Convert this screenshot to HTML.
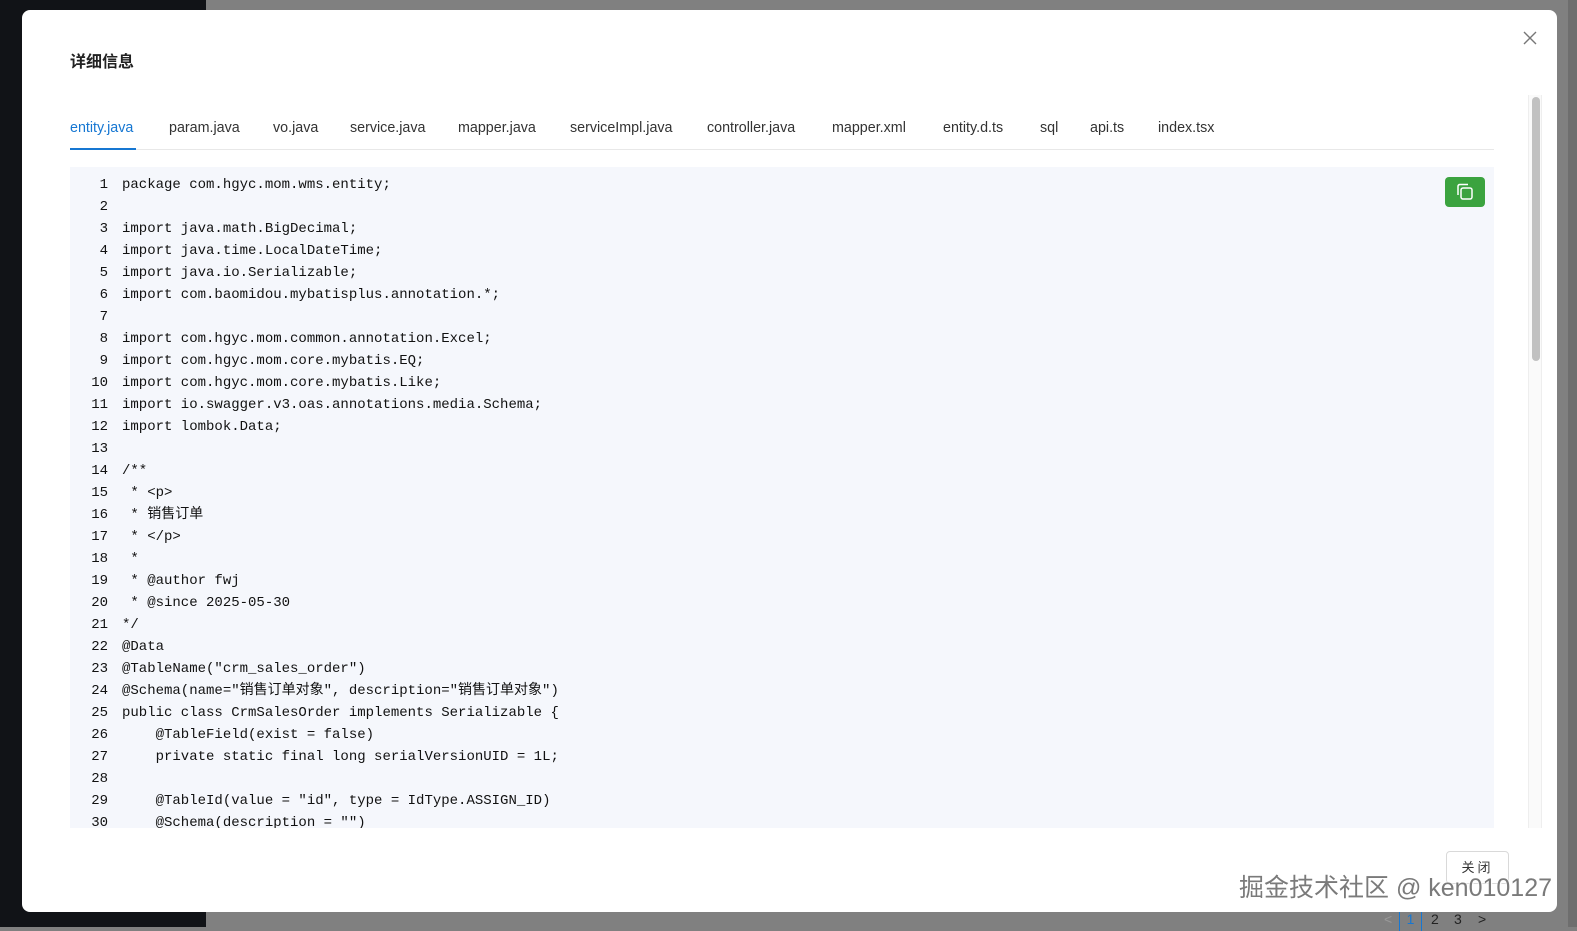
<!DOCTYPE html>
<html><head><meta charset="utf-8"><style>
*{margin:0;padding:0;box-sizing:border-box}
html,body{width:1577px;height:927px;overflow:hidden;background:#808080;font-family:"Liberation Sans","Noto Sans CJK SC",sans-serif}
.left{position:absolute;left:0;top:0;width:206px;height:927px;background:#111317}
.pbar{position:absolute;left:1568px;top:0;width:9px;height:927px;background:#6e6e6e}
.modal{position:absolute;left:22px;top:10px;width:1535px;height:902px;background:#fff;border-radius:8px}
.title{position:absolute;left:70px;top:48px;font-size:16px;font-weight:bold;color:#222}
.x{position:absolute;left:1522px;top:30px}
.tabs{position:absolute;left:70px;top:0;width:1424px;height:150px;border-bottom:1px solid #e8e8e8}
.tab{position:absolute;top:120px;font-size:14.3px;color:#333;white-space:nowrap}
.tab.on{color:#1677d2}
.ink{position:absolute;left:70px;top:148px;width:66px;height:2px;background:#1677d2}
.code{position:absolute;left:70px;top:167px;width:1424px;height:661px;background:#f5f7fc;overflow:hidden}
.ln{position:absolute;left:0;top:8px;width:38px;text-align:right;font-family:"Liberation Mono","Noto Sans CJK SC",monospace;font-size:14px;line-height:21.98px;color:#111;white-space:pre}
.src{position:absolute;left:52px;top:8px;font-family:"Liberation Mono","Noto Sans CJK SC",monospace;font-size:14px;line-height:21.98px;color:#111;white-space:pre}
.copy{position:absolute;left:1445px;top:177px;width:40px;height:30px;background:#3ba33f;border-radius:4px}
.track{position:absolute;left:1528px;top:95px;width:14px;height:733px;background:#fafafa;border-left:1px solid #eee;border-right:1px solid #eee}
.thumb{position:absolute;left:1532px;top:97px;width:8px;height:264px;background:#c1c1c1;border-radius:4px}
.btn{position:absolute;left:1446px;top:851px;width:63px;height:33px;border:1px solid #d9d9d9;border-radius:4px;font-size:13px;color:#333;text-align:center;line-height:31px;letter-spacing:3px;background:#fff}
.wm{position:absolute;left:1239px;top:868px;font-size:25px;color:#7a7a7a;white-space:nowrap;text-shadow:0 0 2px #fff,0 0 2px #fff,1px 1px 1px #fff}
.pg{position:absolute;top:911px;font-size:14px;color:#222}
</style></head><body>
<div class="left"></div>
<div class="pbar"></div>
<div class="pg" style="left:1384px;color:#999">&lt;</div>
<div class="pg" style="left:1399px;width:23px;height:20px;border-left:1px solid #1677d2;border-right:1px solid #1677d2;text-align:center;color:#1677d2">1</div>
<div class="pg" style="left:1431px">2</div>
<div class="pg" style="left:1454px">3</div>
<div class="pg" style="left:1478px">&gt;</div>
<div class="modal"></div>
<div class="title">详细信息</div>
<svg class="x" width="16" height="16" viewBox="0 0 16 16"><path d="M2 2L14 14M14 2L2 14" stroke="#777" stroke-width="1.4"/></svg>
<div class="tabs"></div>
<div class="tab on" style="left:70px">entity.java</div>
<div class="tab" style="left:169px">param.java</div>
<div class="tab" style="left:273px">vo.java</div>
<div class="tab" style="left:350px">service.java</div>
<div class="tab" style="left:458px">mapper.java</div>
<div class="tab" style="left:570px">serviceImpl.java</div>
<div class="tab" style="left:707px">controller.java</div>
<div class="tab" style="left:832px">mapper.xml</div>
<div class="tab" style="left:943px">entity.d.ts</div>
<div class="tab" style="left:1040px">sql</div>
<div class="tab" style="left:1090px">api.ts</div>
<div class="tab" style="left:1158px">index.tsx</div>
<div class="ink"></div>
<div class="code">
<div class="ln">1
2
3
4
5
6
7
8
9
10
11
12
13
14
15
16
17
18
19
20
21
22
23
24
25
26
27
28
29
30</div>
<div class="src">package com.hgyc.mom.wms.entity;

import java.math.BigDecimal;
import java.time.LocalDateTime;
import java.io.Serializable;
import com.baomidou.mybatisplus.annotation.*;

import com.hgyc.mom.common.annotation.Excel;
import com.hgyc.mom.core.mybatis.EQ;
import com.hgyc.mom.core.mybatis.Like;
import io.swagger.v3.oas.annotations.media.Schema;
import lombok.Data;

/**
 * &lt;p&gt;
 * 销售订单
 * &lt;/p&gt;
 *
 * @author fwj
 * @since 2025-05-30
*/
@Data
@TableName("crm_sales_order")
@Schema(name="销售订单对象", description="销售订单对象")
public class CrmSalesOrder implements Serializable {
    @TableField(exist = false)
    private static final long serialVersionUID = 1L;

    @TableId(value = "id", type = IdType.ASSIGN_ID)
    @Schema(description = "")</div>
</div>
<div class="copy"><svg width="40" height="30" viewBox="0 0 40 30"><rect x="16" y="11" width="11" height="11" rx="2" fill="none" stroke="#fff" stroke-width="1.5"/><path d="M13 18V9.5Q13 7.5 15 7.5H23" fill="none" stroke="#fff" stroke-width="1.5"/></svg></div>
<div class="track"></div>
<div class="thumb"></div>
<div class="btn">关闭</div>
<div class="wm">掘金技术社区 @ ken010127</div>
</body></html>
